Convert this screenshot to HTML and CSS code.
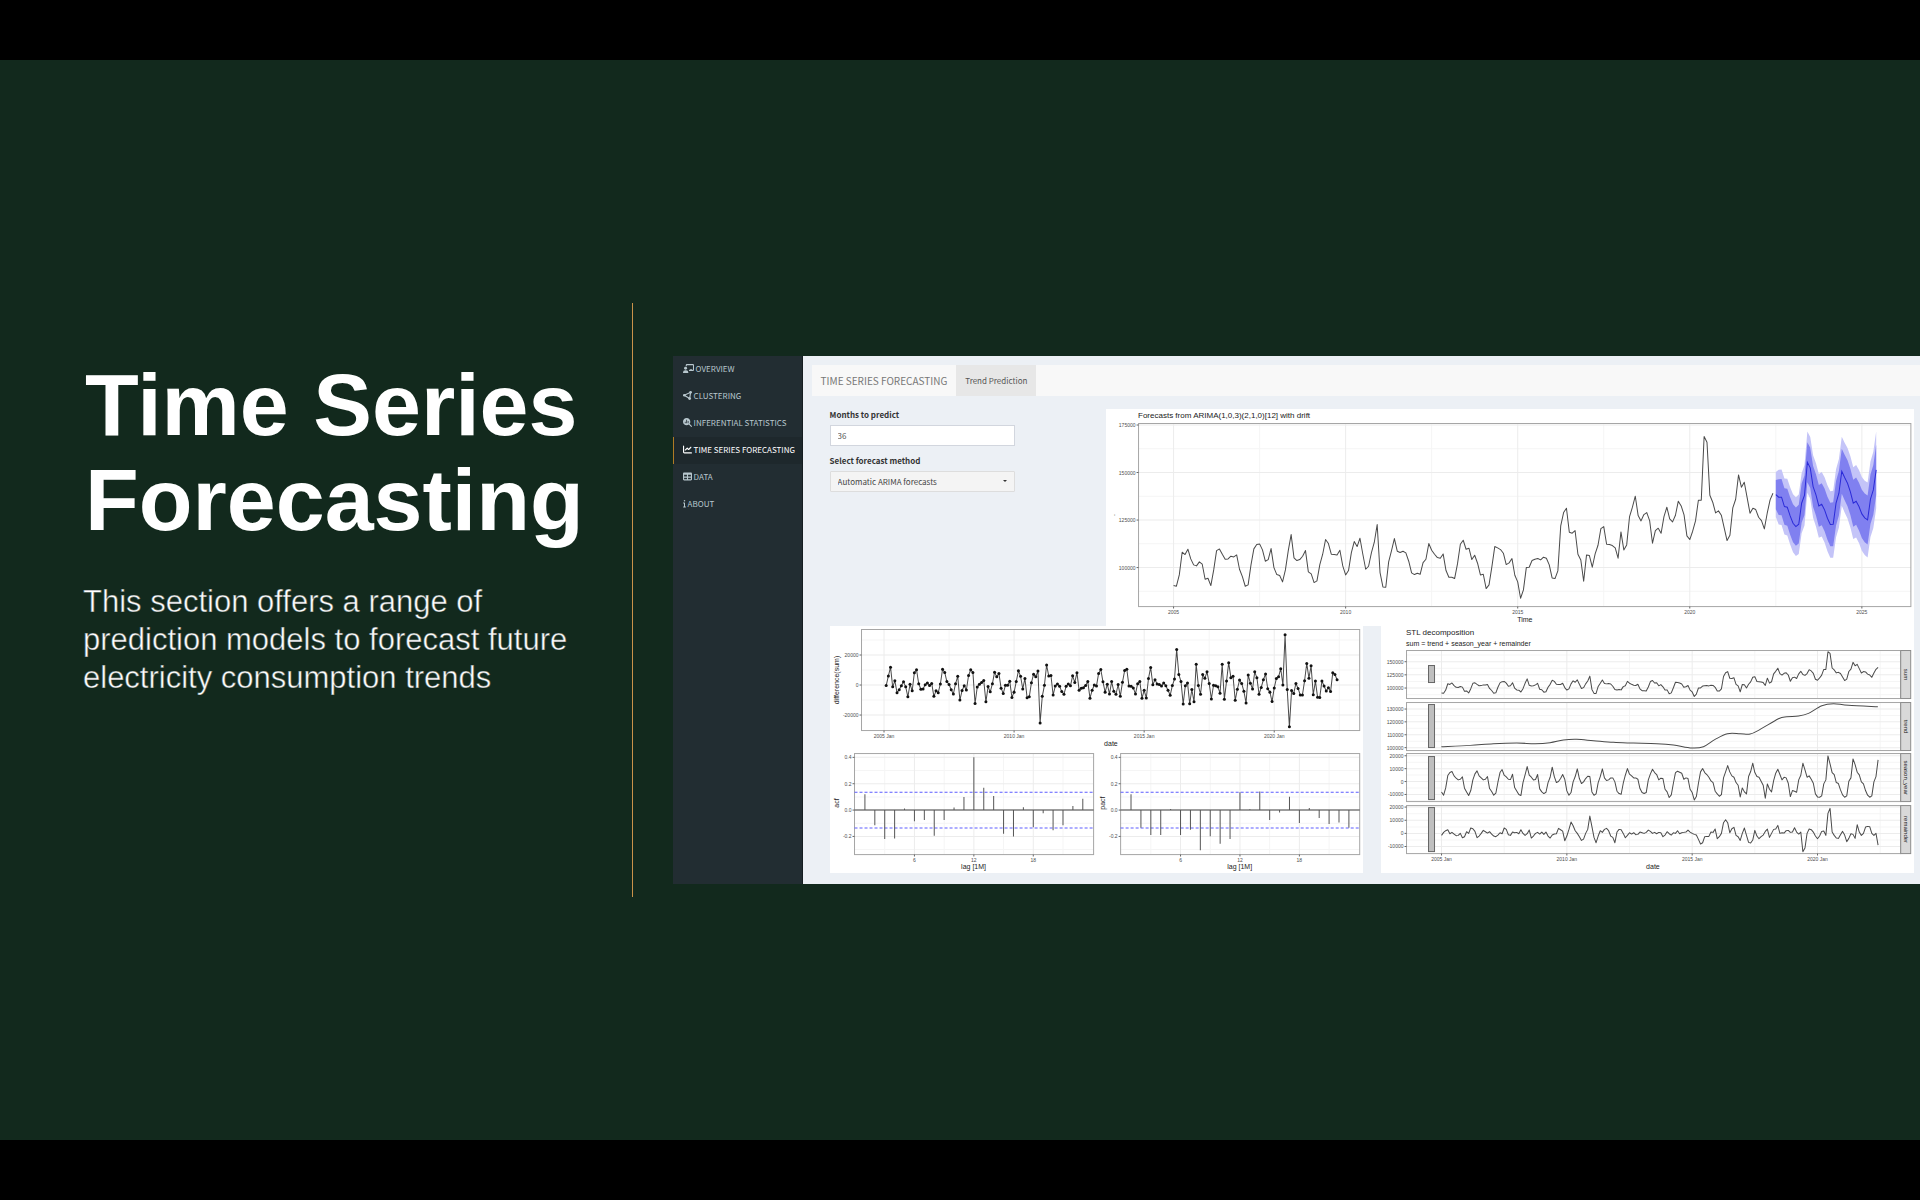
FILE: index.html
```html
<!DOCTYPE html>
<html lang="en">
<head>
<meta charset="utf-8">
<meta name="viewport" content="width=device-width, initial-scale=1">
<title>Time Series Forecasting</title>
<link rel="stylesheet" href="styles.css">
</head>
<body>
<main class="slide">
  <section class="intro">
    <h1 class="intro-title">Time Series Forecasting</h1>
    <p class="intro-text">This section offers a range of prediction models to forecast future electricity consumption trends</p>
  </section>

  <section class="app">
    <nav class="sidebar">
      <a class="side-link" href="#overview">
        <svg class="icon icon-wide" viewBox="0 0 640 512"><path fill="none" stroke="currentColor" stroke-width="60" d="M190 130V62q0-32 32-32h356q32 0 32 32v280q0 32-32 32H350"/><circle cx="150" cy="236" r="86"/><path d="M0 490q0-130 130-130h50q130 0 130 130v22H0zM390 300h150v104H390z"/></svg>
        OVERVIEW</a>
      <a class="side-link" href="#clustering">
        <svg class="icon" viewBox="0 0 512 512"><path fill="none" stroke="currentColor" stroke-width="64" d="M70 240 430 75 380 425z"/><circle cx="75" cy="240" r="75"/><circle cx="430" cy="78" r="76"/><circle cx="376" cy="430" r="80"/></svg>
        CLUSTERING</a>
      <a class="side-link" href="#inferential">
        <svg class="icon" viewBox="0 0 512 512"><path d="M416 208c0 45.900-14.900 88.300-40 122.700L502.600 457.400c12.500 12.500 12.500 32.800 0 45.300s-32.800 12.500-45.300 0L330.700 376c-34.400 25.200-76.800 40-122.700 40C93.100 416 0 322.900 0 208S93.100 0 208 0S416 93.100 416 208z"/><path class="icon-cut" d="M104 216h44v88h-44zM186 104h44v200h-44zM268 176h44v128h-44z"/></svg>
        INFERENTIAL STATISTICS</a>
      <a class="side-link side-link-active" href="#forecasting">
        <svg class="icon" viewBox="0 0 512 512"><path d="M64 64c0-17.700-14.300-32-32-32S0 46.300 0 64V400c0 44.200 35.800 80 80 80H480c17.700 0 32-14.300 32-32s-14.300-32-32-32H80c-8.800 0-16-7.200-16-16V64zm406.600 86.600c12.500-12.500 12.500-32.800 0-45.300s-32.800-12.500-45.300 0L320 210.700l-57.400-57.400c-12.500-12.500-32.800-12.500-45.300 0l-112 112c-12.500 12.500-12.500 32.800 0 45.300s32.800 12.500 45.300 0L240 221.300l57.400 57.400c12.500 12.500 32.800 12.500 45.300 0l128-128z"/></svg>
        TIME SERIES FORECASTING</a>
      <a class="side-link" href="#data">
        <svg class="icon" viewBox="0 0 512 512"><path d="M64 256V160H224v96H64zm0 64H224v96H64V320zm224 96V320H448v96H288zM448 256H288V160H448v96zM64 32C28.700 32 0 60.700 0 96V416c0 35.300 28.700 64 64 64H448c35.300 0 64-28.700 64-64V96c0-35.300-28.700-64-64-64H64z"/></svg>
        DATA</a>
      <a class="side-link" href="#about">
        <svg class="icon icon-narrow" viewBox="0 0 192 512"><path d="M48 80a48 48 0 1 1 96 0A48 48 0 1 1 48 80zM0 224c0-17.700 14.300-32 32-32H96c17.700 0 32 14.300 32 32V448h32c17.700 0 32 14.300 32 32s-14.300 32-32 32H32c-17.700 0-32-14.300-32-32s14.300-32 32-32H64V256H32c-17.700 0-32-14.300-32-32z"/></svg>
        ABOUT</a>
    </nav>

    <div class="content">
      <header class="navbar">
        <span class="brand">TIME SERIES FORECASTING</span>
        <a class="tab" href="#trend">Trend Prediction</a>
      </header>
      <div class="panels">
        <div class="top-row">
          <form class="controls">
            <label class="field-label" for="months">Months to predict</label>
            <input class="field" id="months" type="text" inputmode="numeric" value="36">
            <label class="field-label" for="method">Select forecast method</label>
            <div class="select-wrap">
              <select class="field field-select" id="method"><option>Automatic ARIMA forecasts</option></select>
            </div>
          </form>
          <svg class="chart" id="forecast" viewBox="0 0 808 217" role="img" aria-label="Forecast chart"></svg>
        </div>
        <div class="bottom-row">
          <svg class="chart" id="difference" viewBox="0 0 533 247" role="img" aria-label="Difference and autocorrelation charts"></svg>
          <svg class="chart" id="stl" viewBox="0 0 533 247" role="img" aria-label="STL decomposition chart"></svg>
        </div>
      </div>
    </div>
  </section>
</main>
<script src="charts.js"></script>
</body>
</html>
```
FILE: styles.css
```css
* { box-sizing: border-box; }

body {
  margin: 0;
  min-height: 100vh;
  display: flex;
  background: #000;
  padding: 60px 0;
  font-family: "Liberation Sans", Arial, sans-serif;
}

.slide {
  flex: 1;
  display: flex;
  align-items: center;
  background: #12291d;
  overflow: hidden;
}

.intro {
  flex: none;
  width: calc(33% - 1px);
  min-height: 594px;
  padding: 54px 40px 0 83px;
  border-right: 1px solid #c9924a;
  color: #fff;
}

.intro-title {
  margin: 0;
  padding-left: 2px;
  font-size: 88px;
  line-height: 95px;
  font-weight: 700;
}

.intro-text {
  margin: 36px 0 0;
  font-size: 31px;
  line-height: 38px;
  -webkit-text-stroke: 1px rgba(18, 41, 29, 0.5);
}

.app {
  flex: 1;
  display: flex;
  min-width: 0;
  margin: 40px 0 0 40px;
  background: #ecf0f5;
  font-family: "Noto Sans CJK SC", "Noto Sans", sans-serif;
  font-size: 8px;
}

.sidebar {
  flex: none;
  width: 130px;
  background: #222d32;
  border-right: 1px solid #151d20;
}

.side-link {
  display: flex;
  align-items: center;
  gap: 2px;
  height: 27px;
  padding: 0 0 2px 9px;
  border-left: 1px solid transparent;
  color: #b8c7ce;
  text-decoration: none;
  white-space: nowrap;
}

.side-link-active {
  background: #1e282c;
  border-left-color: #b07a25;
  color: #fff;
}

.icon { width: 9px; height: 9px; fill: currentColor; }
.icon-wide { width: 11px; }
.icon-narrow { width: 3px; }
.icon-cut { fill: #222d32; }

.content {
  flex: 1;
  min-width: 0;
  padding: 9px 0 11px 9px;
}

.navbar {
  display: flex;
  align-items: stretch;
  height: 31px;
  background: #f8f8f8;
  color: #777;
}

.brand {
  padding: 0 9px;
  font-size: 10px;
  line-height: 31px;
}

.tab {
  padding: 0 9px;
  background: #e7e7e7;
  color: #555;
  line-height: 31px;
  text-decoration: none;
}

.panels { padding: 13px 6px 0 18px; }

.top-row {
  display: grid;
  grid-template-columns: 185px 1fr;
  gap: 91px;
  align-items: start;
}

.controls {
  display: flex;
  flex-direction: column;
}

.field-label {
  height: 16px;
  line-height: 12px;
  font-weight: 700;
  color: #333;
}

.field {
  width: 100%;
  height: 21px;
  margin: 0 0 9px;
  padding: 0 7px;
  border: 1px solid #d2d6de;
  border-radius: 0;
  background: #fff;
  color: #555;
  font: inherit;
}

.field-select {
  appearance: none;
  background: #f4f4f4;
  border-color: #ddd;
  border-radius: 1px;
  color: #444;
}

.select-wrap { position: relative; }

.select-wrap::after {
  content: "";
  position: absolute;
  right: 8px;
  top: 9px;
  border: 2px solid transparent;
  border-top-color: #333;
  border-bottom: 0;
}

.chart {
  display: block;
  width: 100%;
  background: #fff;
  font-family: "Liberation Sans", Arial, sans-serif;
}

.bottom-row {
  display: grid;
  grid-template-columns: 1fr 1fr;
  gap: 18px;
}

.chart text { dominant-baseline: central; }
.tick-label { font-size: 5px; fill: #4d4d4d; }
.axis-title { font-size: 7px; fill: #222; }
.chart-title { font-size: 8px; fill: #222; }
.strip-label { font-size: 6px; fill: #222; }
.grid-major { stroke: #ececec; }
.grid-minor { stroke: #f5f5f5; }
.frame { fill: none; stroke: #a6a6a6; }
.tick { stroke: #666; }
.line { fill: none; stroke: #4a4a4a; stroke-width: 1; stroke-linejoin: round; }
.dot { fill: #111; }
.bar { stroke: #555; stroke-width: 1; }
.zero { stroke: #444; }
.bound { stroke: #5c5cff; stroke-dasharray: 3 2; }
.strip { fill: #d9d9d9; stroke: #8c8c8c; }
.range { fill: #bfbfbf; stroke: #666; }
.band-outer { fill: #c4c4f8; }
.band-inner { fill: #8080f0; }
.mean { fill: none; stroke: #2a2ad8; }
```
FILE: charts.js
```js
const NS = 'http://www.w3.org/2000/svg';

function add(svg, name, attrs, text) {
  const node = document.createElementNS(NS, name);
  for (const key in attrs) node.setAttribute(key, attrs[key]);
  if (text !== undefined) node.textContent = text;
  svg.appendChild(node);
  return node;
}
const r = n => Math.round(n * 100) / 100;
const line = (svg, cls, x1, y1, x2, y2) => add(svg, 'line', { class: cls, x1: r(x1), y1: r(y1), x2: r(x2), y2: r(y2) });
const label = (svg, cls, x, y, text, anchor = 'start') => add(svg, 'text', { class: cls, x: r(x), y: r(y), 'text-anchor': anchor }, text);
const turned = (svg, cls, x, y, text, angle) =>
  add(svg, 'text', { class: cls, 'text-anchor': 'middle', transform: `translate(${x} ${y}) rotate(${angle})` }, text);
const points = list => list.map(p => r(p[0]) + ',' + r(p[1])).join(' ');

// Grid, frame, ticks and tick labels of one plot panel.
function panel(svg, o) {
  (o.yMinor || []).forEach(y => line(svg, 'grid-minor', o.x0, y, o.x1, y));
  (o.xMinor || []).forEach(x => line(svg, 'grid-minor', x, o.y0, x, o.y1));
  o.yTicks.forEach(([y]) => line(svg, 'grid-major', o.x0, y, o.x1, y));
  o.xTicks.forEach(([x]) => line(svg, 'grid-major', x, o.y0, x, o.y1));
  add(svg, 'rect', { class: 'frame', x: o.x0, y: o.y0, width: r(o.x1 - o.x0), height: r(o.y1 - o.y0) });
  o.yTicks.forEach(([y, t]) => {
    line(svg, 'tick', o.x0 - 2, y, o.x0, y);
    label(svg, 'tick-label', o.x0 - 3, y, t, 'end');
  });
  if (!o.hideX) o.xTicks.forEach(([x, t]) => {
    line(svg, 'tick', x, o.y1, x, o.y1 + 2);
    label(svg, 'tick-label', x, o.y1 + 5, t, 'middle');
  });
}

// Monthly consumption from January 2005, as heights under the 100000 mark.
const levels = [
  557,559,525,457,464,448,477,495,498,486,493,538, 535,557,510,452,447,463,478,477,469,471,465,508,
  530,559,555,495,447,434,432,450,484,479,446,503, 524,527,546,510,452,404,474,482,479,469,452,516,
  522,548,543,494,463,419,431,463,464,465,451,498, 525,512,458,425,440,415,463,508,499,458,427,374,
  518,561,562,486,452,416,454,458,454,459,484,519, 524,520,523,488,478,431,451,463,473,475,462,512,
  532,532,536,492,433,421,448,445,479,466,490,525, 523,566,555,500,440,444,449,460,494,489,476,526,
  546,595,570,503,502,482,478,476,480,472,475,495, 534,536,513,378,338,325,397,400,392,463,480,544,
  465,467,502,462,436,386,380,433,434,437,444,475, 396,450,435,350,322,289,347,363,344,338,362,430,
  392,385,400,350,322,357,366,346,304,318,345,408, 419,394,363,301,301,110,127,286,307,339,333,346,
  384,422,406,324,298,225,262,247,293,340,325,329, 352,362,387,340,300,280];
const sum = levels.map(v => 100000 + (503 - v) * 175.4);

const forecastLevels = [
  284,292,292,320,322,348,370,380,373,310,286,187,204,260,285,318,313,330,
  355,374,373,310,280,214,233,250,276,310,304,320,342,354,360,298,270,210];
const mean = forecastLevels.map(v => 100000 + (503 - v) * 175.4);

const season = [
  516,526,504,467,458,455,468,475,480,478,471,505, 516,527,512,480,462,453,468,474,480,478,470,506,
  515,526,520,487,458,449,466,471,478,479,463,503, 513,524,527,488,465,440,466,472,480,479,464,507,
  516,521,517,488,472,442,470,488,485,476,464,478, 513,526,518,486,470,447,476,491,486,476,469,470,
  516,526,522,488,470,447,474,482,480,474,474,486, 514,521,523,490,466,446,463,468,474,474,478,506,
  518,521,518,480,462,448,458,464,480,475,476,508, 516,533,525,490,458,454,457,460,478,474,476,508,
  518,540,530,490,456,446,458,464,472,483,488,514, 522,529,524,474,456,437,456,468,472,488,496,531,
  504,516,522,470,455,430,458,470,472,484,496,535, 492,508,516,482,460,448,464,480,472,474,490,530,
  512,514,517,480,466,430,450,472,468,478,490,522, 531,532,528,492,480,408,432,458,464,488,491,510,
  525,532,528,484,474,417,434,457,465,486,492,512, 526,532,528,486,470,420
].map(v => (485 - v) / 3);

const remainder = [
  646,637,632,629,641,637,642,647,646,640,653,650, 635,640,624,626,634,653,648,640,631,635,639,635,
  642,648,650,645,638,641,624,628,644,646,636,638, 637,641,629,640,646,641,630,654,648,640,637,642,
  636,643,636,648,654,645,642,641,625,629,633,662, 648,628,606,617,632,640,650,661,657,640,628,588,
  620,652,668,648,632,637,628,625,632,648,652,668, 636,628,629,640,653,646,638,642,638,644,643,636,
  638,640,637,630,634,640,637,641,637,638,650,645, 635,641,645,638,640,632,641,638,637,636,630,636,
  640,643,645,658,672,668,650,649,649,636,637,627, 656,650,640,608,599,608,638,626,622,646,650,661,
  640,624,646,667,669,660,631,648,656,650,645,634, 627,652,640,628,627,616,640,638,639,632,631,637,
  636,623,636,642,636,695,684,640,627,629,636,648, 656,648,634,633,646,580,565,636,646,654,655,644,
  634,645,665,655,641,643,655,614,636,646,640,621, 619,620,640,646,640,675
].map(v => (640 - v) / 3);

const years = [2005, 2010, 2015, 2020, 2025];

// Forecast
{
  const svg = document.getElementById('forecast');
  const X = m => 67.5 + m * 172 / 60;
  const Y = v => 158.5 - (v - 100000) * 47.5 / 25000;
  panel(svg, {
    x0: 32.5, x1: 804.5, y0: 14.5, y1: 197.5,
    xTicks: years.map((y, i) => [X(i * 60), y]), xMinor: [30, 90, 150, 210].map(X),
    yTicks: [175000, 150000, 125000, 100000].map(v => [Y(v), v]),
    yMinor: [162500, 137500, 112500, 87500].map(Y)
  });
  label(svg, 'chart-title', 32, 6, 'Forecasts from ARIMA(1,0,3)(2,1,0)[12] with drift');
  label(svg, 'axis-title', 411, 210, 'Time');
  turned(svg, 'axis-title', 6, 106, '.', -90);
  add(svg, 'polyline', { class: 'line', points: points(sum.map((v, i) => [X(i), Y(v)])) });
  // Interval half-widths grow with the horizon.
  const X2 = i => X(210 + i);
  const half = i => i === 0 ? 44 : 53 + i * 0.64;
  const band = k => points([
    ...mean.map((v, i) => [X2(i), Y(v) - half(i) * k / 3]),
    ...mean.map((v, i) => [X2(i), Y(v) + half(i) * k / 3]).reverse()]);
  add(svg, 'polygon', { class: 'band-outer', points: band(1.53) });
  add(svg, 'polygon', { class: 'band-inner', points: band(1) });
  add(svg, 'polyline', { class: 'mean', points: points(mean.map((v, i) => [X2(i), Y(v)])) });
}

// Differenced series, ACF and PACF
{
  const svg = document.getElementById('difference');
  const X = m => 54 + m * 2.167;
  const Y = v => 59 - v * 30 / 20000;
  panel(svg, {
    x0: 31.5, x1: 529.5, y0: 3.5, y1: 104.5,
    xTicks: years.slice(0, 4).map((y, i) => [X(i * 60), y + ' Jan']), xMinor: [30, 90, 150, 210].map(X),
    yTicks: [20000, 0, -20000].map(v => [Y(v), v]), yMinor: [30000, 10000, -10000].map(Y)
  });
  turned(svg, 'axis-title', 6, 54, 'difference(sum)', -90);
  label(svg, 'axis-title', 274, 117, 'date');
  const list = sum.slice(1).map((v, i) => [X(i + 1), Y(v - sum[i])]);
  add(svg, 'polyline', { class: 'line', points: points(list) });
  list.forEach(p => add(svg, 'circle', { class: 'dot', cx: r(p[0]), cy: r(p[1]), r: 1.5 }));

  const correlogram = (x0, lag0, name, values) => {
    const L = n => lag0 + n * 9.9;
    const C = v => 184 - v * 131.7;
    panel(svg, {
      x0, x1: x0 + 239, y0: 127.5, y1: 228.5,
      xTicks: [6, 12, 18].map(n => [L(n), n]), xMinor: [3, 9, 15, 21].map(L),
      yTicks: ['0.4', '0.2', '0.0', '-0.2'].map(t => [C(+t), t]), yMinor: [0.3, 0.1, -0.1, -0.3].map(C)
    });
    line(svg, 'zero', x0, C(0), x0 + 239, C(0));
    [0.136, -0.136].forEach(v => line(svg, 'bound', x0, C(v), x0 + 239, C(v)));
    values.forEach((v, i) => line(svg, 'bar', L(i + 1), C(0), L(i + 1), C(v)));
    turned(svg, 'axis-title', x0 - 18, 177, name, -90);
    label(svg, 'axis-title', x0 + 119, 240, 'lag [1M]', 'middle');
  };
  correlogram(24.5, 25, 'acf', [0.12, -0.115, -0.22, -0.215, 0.012, -0.085, -0.075, -0.195, -0.075, 0.02, 0.1,
    0.4, 0.17, 0.106, -0.18, -0.2, 0.022, -0.13, -0.025, -0.153, -0.115, 0.03, 0.086]);
  correlogram(290.5, 291, 'pacf', [0.12, -0.135, -0.19, -0.19, 0.008, -0.19, -0.15, -0.305, -0.198, -0.255, -0.22,
    0.135, 0.006, 0.14, -0.075, -0.018, 0.102, -0.098, 0.015, -0.06, -0.105, -0.095, -0.135]);
}

// STL decomposition
{
  const svg = document.getElementById('stl');
  const X = m => 60.5 + m * 2.088;
  label(svg, 'chart-title', 25, 6, 'STL decomposition');
  label(svg, 'axis-title', 25, 17, 'sum = trend + season_year + remainder');
  label(svg, 'axis-title', 265, 240, 'date');

  const rows = [
    { name: 'sum', y0: 24.5, ticks: [[35.7, 150000], [48.8, 125000], [62, 100000]], minor: [29, 42.3, 55.4, 68.6], range: [39.5, 56.5] },
    { name: 'trend', y0: 76.5, ticks: [[83, 130000], [95.8, 120000], [108.7, 110000], [121.6, 100000]], minor: [89.4, 102.2, 115.2], range: [78.5, 121.5] },
    { name: 'season_year', y0: 127.5, ticks: [[129.7, 20000], [142.6, 10000], [155.5, 0], [168.4, -10000]], minor: [136.2, 149, 162, 174.8], range: [130.5, 173.5] },
    { name: 'remainder', y0: 179.5, ticks: [[181, 20000], [194.2, 10000], [207.3, 0], [220.4, -10000]], minor: [187.6, 200.8, 213.9], range: [181.5, 225.5] }
  ];
  rows.forEach((row, i) => {
    panel(svg, {
      x0: 25.5, x1: 519.5, y0: row.y0, y1: row.y0 + 48, hideX: i < 3,
      xTicks: years.slice(0, 4).map((y, k) => [X(k * 60), y + ' Jan']), xMinor: [30, 90, 150, 210].map(X),
      yTicks: row.ticks, yMinor: row.minor
    });
    add(svg, 'rect', { class: 'strip', x: 519.5, y: row.y0, width: 10, height: 48 });
    turned(svg, 'strip-label', 525, row.y0 + 24, row.name, 90);
    add(svg, 'rect', { class: 'range', x: 47.5, y: row.range[0], width: 6, height: row.range[1] - row.range[0] });
  });

  const draw = list => add(svg, 'polyline', { class: 'line', points: points(list) });
  draw(sum.map((v, i) => [X(i), 62 - (v - 100000) * 13.15 / 25000]));
  draw(season.map((v, i) => [X(i), 155.5 - v]));
  draw(remainder.map((v, i) => [X(i), 207.3 - v]));

  const knots = [[214,380],[300,376],[370,371],[440,369],[495,371],[540,368],[580,360],[620,358],[670,362],[730,367],
    [790,369],[860,371],[910,375],[965,384],[1000,380],[1035,358],[1072,341],[1110,341],[1140,342],[1170,328],[1225,296],
    [1250,290],[1285,288],[1315,280],[1355,257],[1390,251],[1435,256],[1523,260]].map(([x, y]) => [x / 3 - 11, y / 3 - 6]);
  let d = 'M' + r(knots[0][0]) + ' ' + r(knots[0][1]);
  for (let i = 0; i < knots.length - 1; i++) {
    const p = knots[i - 1] || knots[i], a = knots[i], b = knots[i + 1], n = knots[i + 2] || b;
    d += 'C' + [a[0] + (b[0] - p[0]) / 6, a[1] + (b[1] - p[1]) / 6, b[0] - (n[0] - a[0]) / 6, b[1] - (n[1] - a[1]) / 6, b[0], b[1]].map(r).join(' ');
  }
  add(svg, 'path', { class: 'line', d });
}
```
